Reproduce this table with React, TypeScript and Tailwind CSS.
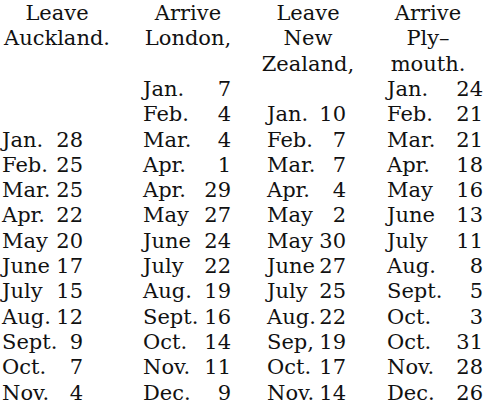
const rows: [string, string, string, string][] = [
  ['', 'Jan.|7', '', 'Jan.|24'],
  ['', 'Feb.|4', 'Jan.|10', 'Feb.|21'],
  ['Jan.|28', 'Mar.|4', 'Feb.|7', 'Mar.|21'],
  ['Feb.|25', 'Apr.|1', 'Mar.|7', 'Apr.|18'],
  ['Mar.|25', 'Apr.|29', 'Apr.|4', 'May|16'],
  ['Apr.|22', 'May|27', 'May|2', 'June|13'],
  ['May|20', 'June|24', 'May|30', 'July|11'],
  ['June|17', 'July|22', 'June|27', 'Aug.|8'],
  ['July|15', 'Aug.|19', 'July|25', 'Sept.|5'],
  ['Aug.|12', 'Sept.|16', 'Aug.|22', 'Oct.|3'],
  ['Sept.|9', 'Oct.|14', 'Sep,|19', 'Oct.|31'],
  ['Oct.|7', 'Nov.|11', 'Oct.|17', 'Nov.|28'],
  ['Nov.|4', 'Dec.|9', 'Nov.|14', 'Dec.|26'],
];

// per-column placement of the date cells
const cellCls = [
  'ml-[2px] w-[81px]',
  'ml-[23px] w-[88px]',
  'ml-[7px] w-[79px]',
  'ml-[9px] w-[96px]',
];

function DateCell({ value, cls }: { value: string; cls: string }) {
  if (!value) return <div className={cls} />;
  const [month, day] = value.split('|');
  return (
    <div className={`flex justify-between whitespace-nowrap ${cls}`}>
      <span>{month}</span>
      <span>{day}</span>
    </div>
  );
}

export default function App() {
  return (
    <div
      className="w-[483px] h-[406px] bg-white text-[#111] text-[21px] leading-[25.3px] pt-[1px] overflow-hidden"
      style={{ fontFamily: '"DejaVu Serif", "Liberation Serif", serif' }}
    >
      <div className="grid grid-cols-[120px_140px_118px_105px] h-[76px]">
        <div className="w-[114px] text-center">
          <div>Leave</div>
          <div>Auckland.</div>
        </div>
        <div className="w-[136px] text-center">
          <div>Arrive</div>
          <div>London,</div>
        </div>
        <div className="w-[96px] text-center">
          <div>Leave</div>
          <div>New</div>
          <div>Zealand,</div>
        </div>
        <div className="w-[100px] text-center">
          <div>Arrive</div>
          <div>Ply–</div>
          <div>mouth.</div>
        </div>
      </div>
      {rows.map((r, i) => (
        <div key={i} className="grid grid-cols-[120px_140px_118px_105px]">
          {r.map((v, j) => (
            <DateCell key={j} value={v} cls={cellCls[j]} />
          ))}
        </div>
      ))}
    </div>
  );
}
